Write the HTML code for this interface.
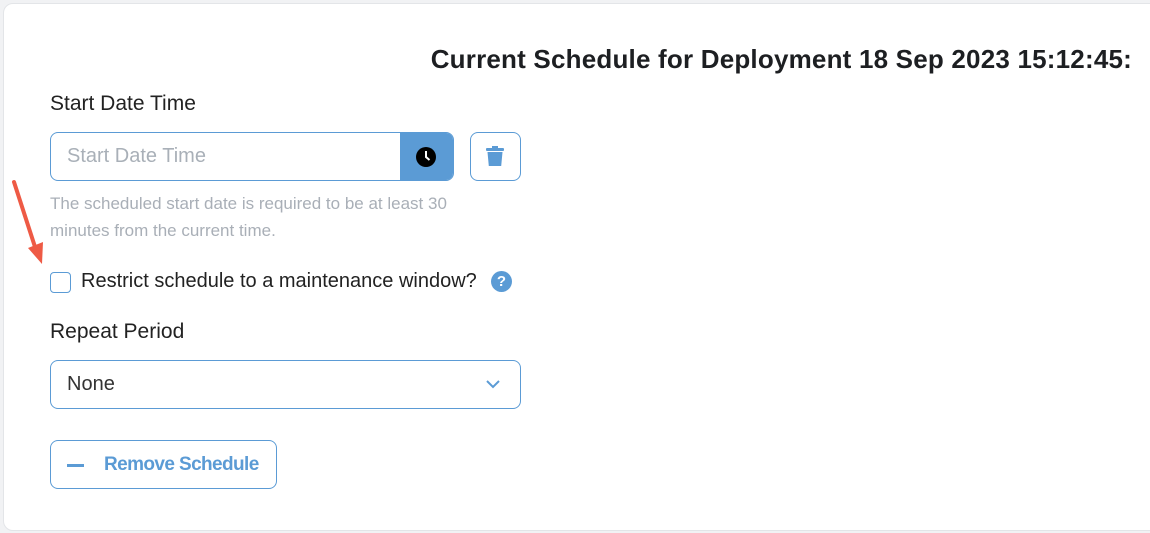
<!DOCTYPE html>
<html><head><style>
body{margin:0;width:1150px;height:533px;background:#f1f2f4;font-family:"Liberation Sans",sans-serif;position:relative;overflow:hidden}
.card{position:absolute;left:3px;top:3px;width:1160px;height:526px;background:#fff;border:1px solid #e3e5e8;border-radius:10px}
.a{position:absolute;white-space:nowrap}
.title{right:18px;top:44px;font-size:26px;font-weight:bold;color:#1d1f22;letter-spacing:0.2px}
.lbl{font-size:21px;color:#222}
.box{border:1.5px solid #5b9bd5;border-radius:8px;box-sizing:border-box;background:#fff}
.help{font-size:17px;color:#a9afb7;line-height:27px}
</style></head><body>
<div class="card"></div>
<div class="a title">Current Schedule for Deployment 18 Sep 2023 15:12:45:</div>
<div class="a lbl" style="left:50px;top:92px">Start Date Time</div>
<div class="a box" style="left:50px;top:132px;width:404px;height:49px;overflow:hidden">
 <div class="a" style="left:16px;top:12px;font-size:20px;color:#a9b0b8">Start Date Time</div>
 <div class="a" style="right:0;top:0;width:53px;height:49px;background:#5b9bd5"></div>
 <svg class="a" style="left:364px;top:13px" width="22" height="22" viewBox="0 0 22 22"><circle cx="11" cy="11" r="10" fill="#000"/><path d="M11 5v6l3.5 3" stroke="#fff" stroke-width="2" fill="none"/></svg>
</div>
<div class="a box" style="left:470px;top:132px;width:51px;height:49px">
 <svg class="a" style="left:15px;top:13px" width="18" height="21" viewBox="0 0 18 21"><rect x="0" y="2" width="18" height="3" rx="1" fill="#5b9bd5"/><rect x="6" y="0" width="6" height="3" fill="#5b9bd5"/><path d="M1.5 6h15l-1.3 14h-12.4z" fill="#5b9bd5"/></svg>
</div>
<div class="a help" style="left:50px;top:190px">The scheduled start date is required to be at least 30<br>minutes from the current time.</div>
<svg class="a" style="left:8px;top:178px" width="40" height="92" viewBox="0 0 40 92"><path d="M6 4L28 72" stroke="#ee5a45" stroke-width="4" stroke-linecap="round"/><path d="M20 70L34 86L35 64Z" fill="#ee5a45"/></svg>
<div class="a box" style="left:50px;top:272px;width:21px;height:21px;border-radius:4px"></div>
<div class="a lbl" style="left:81px;top:270px;font-size:20px">Restrict schedule to a maintenance window?</div>
<div class="a" style="left:491px;top:271px;width:21px;height:21px;border-radius:50%;background:#5b9bd5;color:#fff;font-weight:bold;font-size:15px;text-align:center;line-height:21px">?</div>
<div class="a lbl" style="left:50px;top:320px">Repeat Period</div>
<div class="a box" style="left:50px;top:360px;width:471px;height:49px">
 <div class="a" style="left:16px;top:12px;font-size:20px;color:#333">None</div>
 <svg class="a" style="left:435px;top:18px" width="14" height="10" viewBox="0 0 14 10"><path d="M1 2l6 6 6-6" stroke="#5b9bd5" stroke-width="2" fill="none"/></svg>
</div>
<div class="a box" style="left:50px;top:440px;width:227px;height:49px">
 <div class="a" style="left:16px;top:23px;width:17px;height:3px;background:#5b9bd5"></div>
 <div class="a" style="left:53px;top:13px;font-size:19px;font-weight:bold;color:#5b9bd5;letter-spacing:-0.6px">Remove Schedule</div>
</div>
</body></html>
